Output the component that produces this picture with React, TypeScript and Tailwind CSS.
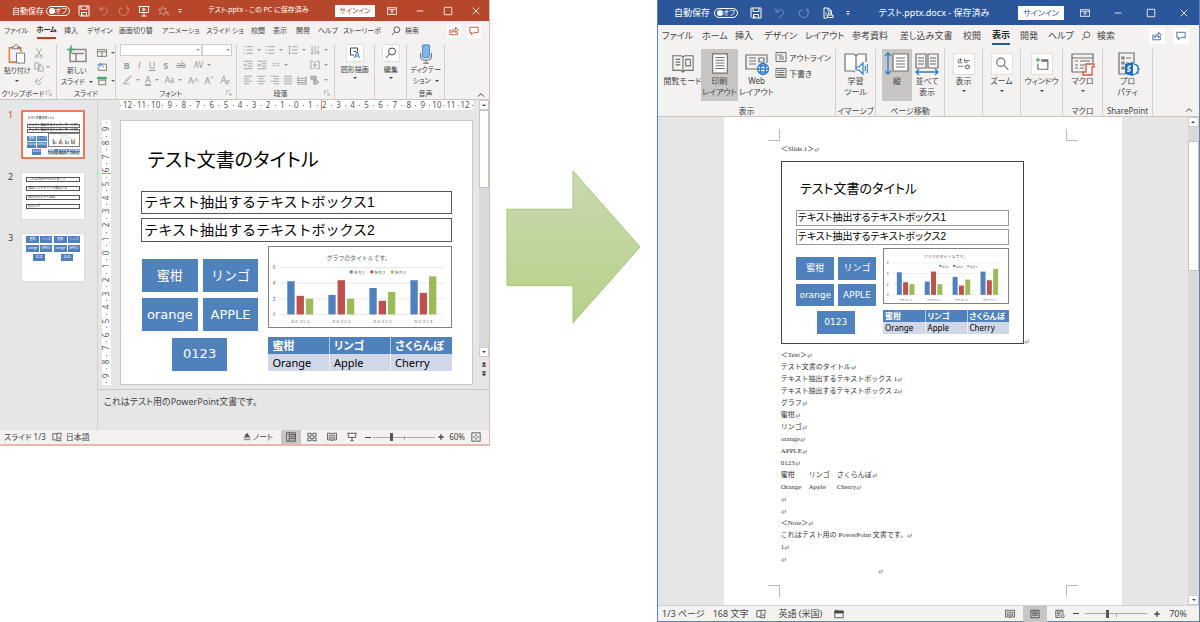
import React from "react";

/* ---------- icon helpers ---------- */

type IcoProps = { children: React.ReactNode; className?: string };

const Ico = ({ children, className = "size-3" }: IcoProps) => (
  <svg
    viewBox="0 0 24 24"
    fill="none"
    stroke="currentColor"
    strokeWidth="2"
    className={`shrink-0 ${className}`}
    aria-hidden="true"
  >
    {children}
  </svg>
);

const SaveIcon = () => (
  <Ico>
    <path d="M2 2h20v20H5l-3-3zM6 2v7h12V2M7 22v-7h10v7M10 22v-4" />
  </Ico>
);
const UndoIcon = () => (
  <Ico className="size-3 opacity-35">
    <path d="M4 3v7h7M4 10c4-6 14-6 15 1 0 4-4 7-9 11" />
  </Ico>
);
const RedoIcon = () => (
  <Ico className="size-3 opacity-35">
    <path d="M5 6a9 9 0 1 0 13 0M18 2v5h5M5 6l4 1" />
  </Ico>
);
const PresentIcon = () => (
  <Ico>
    <path d="M1 3h22M3 3v12h18V3M12 15v7M7 22h10M10 6v6l5-3z" />
  </Ico>
);
const SparkIcon = () => (
  <Ico className="size-3 opacity-40">
    <path d="M9 3l2 5 5-2-2 5 5 3-6 1-1 6-4-5-6 2 3-5-4-5 6 1z" />
    <path d="M15 15l7 7M18 14l4 4" />
  </Ico>
);
const PrintDocIcon = () => (
  <Ico>
    <path d="M10 22H4V2h9l6 6v4M12 2v6h7M11 16h11v5H11zM13 16v-4h6v4M7 12h3M7 16h2" />
  </Ico>
);
const RibbonModeIcon = () => (
  <Ico className="size-2.5">
    <path d="M1 4h22v16H1zM1 8h22M12 18v-7M8 14l4-4 4 4" />
  </Ico>
);
const MinusIcon = () => (
  <Ico className="size-2.5">
    <path d="M4 12h16" />
  </Ico>
);
const SquareIcon = () => (
  <Ico className="size-2.5">
    <path d="M3 3h18v18H3z" />
  </Ico>
);
const CloseIcon = () => (
  <Ico className="size-2.5">
    <path d="M4 4l16 16M20 4L4 20" />
  </Ico>
);
const SearchIcon = ({ className = "size-2.5" }: { className?: string }) => (
  <Ico className={className}>
    <circle cx="14" cy="9" r="7" />
    <path d="M9 14l-7 8" />
  </Ico>
);
const ZoomIcon = () => (
  <Ico className="size-3.5">
    <circle cx="10" cy="9" r="7" />
    <path d="M15 14l8 8" />
  </Ico>
);
const ShareIcon = () => (
  <Ico className="size-2.5">
    <path d="M6 10H2v11h18v-7M6 16c1-6 5-8 10-8V3l6 7-6 6v-4c-4 0-7 1-10 4z" />
  </Ico>
);
const CommentIcon = () => (
  <Ico className="size-2.5">
    <path d="M2 3h20v13H11l-5 5v-5H2z" />
  </Ico>
);
const BookIcon = ({ className = "size-2.5" }: { className?: string }) => (
  <Ico className={className}>
    <path d="M1 3h9l2 2 2-2h9v16h-9l-2 2-2-2H1zM12 5v16M4 8h5M4 12h5M4 15h5M15 8h5M15 12h5M15 15h5" />
  </Ico>
);
const ProofIcon = () => (
  <Ico className="size-2.5">
    <path d="M12 4H2v15h8l2 2V4l2-1h8v4M12 21h9v-7M14 13l3 3 6-8" />
  </Ico>
);
const Caret = () => (
  <svg viewBox="0 0 8 4" className="h-0.5 w-1 shrink-0" aria-hidden="true">
    <path d="M0 0h8L4 4z" fill="currentColor" />
  </svg>
);
const QuickMenuIcon = () => (
  <svg viewBox="0 0 8 10" className="h-1.5 w-1" aria-hidden="true">
    <path d="M1 1h6v2H1zM1 5h6L4 9z" fill="currentColor" />
  </svg>
);
const ChevronUp = () => (
  <Ico className="size-2">
    <path d="M3 17l9-9 9 9" strokeWidth="3" />
  </Ico>
);

type BtnProps = {
  label: string;
  children: React.ReactNode;
  className?: string;
};
const Btn = ({ label, children, className = "" }: BtnProps) => (
  <button type="button" aria-label={label} className={`flex items-center justify-center ${className}`}>
    {children}
  </button>
);

/* ---------- slide content ---------- */

const bars = [
  [35, 50, 53],
  [49, 34, 53],
  [42, 55, 46],
  [34, 47, 30],
];
const barColors = ["#4f81bd", "#c0504d", "#9bbb59"];

const Chart = () => (
  <svg viewBox="0 0 184 82" className="h-full w-full" role="img" aria-label="グラフのタイトルです。">
    <g fontFamily="'Noto Sans CJK JP', sans-serif" fill="#595959">
      <text x="91" y="13" textAnchor="middle" fontSize="6">
        グラフのタイトルです。
      </text>
      {[0, 2, 4, 6].map((v) => (
        <g key={v}>
          <path d={`M10 ${69 - v * 8}H178`} stroke="#d9d9d9" strokeWidth="0.6" />
          <text x="3" y={71 - v * 8} fontSize="5">
            {v}
          </text>
        </g>
      ))}
      {["系列 1", "系列 2", "系列 3"].map((s, i) => (
        <g key={s}>
          <rect x={82 + i * 21} y="24" width="3" height="3" fill={barColors[i]} />
          <text x={86 + i * 21} y="28" fontSize="4">
            {s}
          </text>
        </g>
      ))}
      {bars.map((group, g) => (
        <g key={g}>
          {group.map((top, i) => (
            <rect key={i} x={18 + g * 42 + i * 9.5} y={top} width="7.5" height={69 - top} fill={barColors[i]} />
          ))}
          <text x={31 + g * 42} y="78" fontSize="4" textAnchor="middle">
            {`カテゴリ ${g + 1}`}
          </text>
        </g>
      ))}
    </g>
  </svg>
);

type SlideSize = "large" | "small" | "thumb";

const titleText = {
  large: "text-[19px]",
  small: "text-[13px]",
  thumb: "text-[3px]",
};
const boxText = {
  large: "text-[14px] px-0.5 border border-[#555]",
  small: "text-[10px] px-px border border-[#999] [font-feature-settings:'palt']",
  thumb: "text-[3px] px-px border border-[#666]",
};
const tileText = {
  large: "text-[13px]",
  small: "text-[9px]",
  thumb: "text-[3px]",
};
const cellText = {
  large: "text-[11px] leading-[17px] pl-1",
  small: "text-[8px] leading-[12px] pl-0.5",
  thumb: "text-[3px] leading-[3px]",
};

const tile =
  "absolute flex h-[12.5%] w-[15.8%] items-center justify-center bg-[#4f81bd] font-['DejaVu_Sans','Noto_Sans_CJK_JP',sans-serif] text-white";

const Slide = ({ size }: { size: SlideSize }) => (
  <div className="relative aspect-[4/3] w-full overflow-hidden bg-white whitespace-nowrap text-black">
    <h2
      className={`absolute top-[8%] left-[7.6%] flex h-[13%] items-center font-['Noto_Sans_CJK_JP',sans-serif] [font-feature-settings:'palt'] ${titleText[size]}`}
    >
      テスト文書のタイトル
    </h2>
    <p
      className={`absolute top-[26.5%] right-[5.8%] left-[5.8%] flex h-[9%] items-center font-['Liberation_Sans','Noto_Sans_CJK_JP',sans-serif] ${boxText[size]}`}
    >
      テキスト抽出するテキストボックス1
    </p>
    <p
      className={`absolute top-[37%] right-[5.8%] left-[5.8%] flex h-[9%] items-center font-['Liberation_Sans','Noto_Sans_CJK_JP',sans-serif] ${boxText[size]}`}
    >
      テキスト抽出するテキストボックス2
    </p>
    <div className={`top-[52.5%] left-[6%] ${tile} ${tileText[size]}`}>蜜柑</div>
    <div className={`top-[52.5%] left-[23.3%] ${tile} ${tileText[size]}`}>リンゴ</div>
    <div className={`top-[67.3%] left-[6%] ${tile} ${tileText[size]}`}>orange</div>
    <div className={`top-[67.3%] left-[23.3%] ${tile} ${tileText[size]}`}>APPLE</div>
    <div className={`top-[82.3%] left-[14.5%] ${tile} ${tileText[size]}`}>0123</div>
    <div className="absolute top-[47.5%] left-[42%] h-[31.2%] w-[52.2%] border border-[#808080]">
      <Chart />
    </div>
    <table
      className={`absolute top-[82%] left-[42%] w-[52.2%] table-fixed border-collapse text-left font-['Noto_Sans','Noto_Sans_CJK_JP',sans-serif] ${cellText[size]}`}
    >
      <thead className="bg-[#4f81bd] text-white">
        <tr>
          {["蜜柑", "リンゴ", "さくらんぼ"].map((h) => (
            <th
              key={h}
              className={`border-r border-white/60 py-0 pr-0 font-bold last:border-r-0 [font-feature-settings:'palt'] ${cellText[size]}`}
            >
              {h}
            </th>
          ))}
        </tr>
      </thead>
      <tbody className="bg-[#d0d8e8]">
        <tr>
          {["Orange", "Apple", "Cherry"].map((c) => (
            <td key={c} className={`border-r border-white/60 py-0 pr-0 last:border-r-0 ${cellText[size]}`}>
              {c}
            </td>
          ))}
        </tr>
      </tbody>
    </table>
  </div>
);

const ThumbTwo = () => (
  <div className="flex aspect-[4/3] w-full flex-col gap-1 bg-white px-1 pt-1 font-['Noto_Sans_CJK_JP',sans-serif]">
    {["これはPowerPoint文書です", "抽出したテキストを検索する", "図形内の文字も抽出", "表の文字"].map((t) => (
      <p key={t} className="border border-[#555] px-px text-[3px] leading-[3px] whitespace-nowrap">
        {t}
      </p>
    ))}
  </div>
);

const miniTile = "flex h-[7px] items-center justify-center bg-[#4f81bd] text-[3px] leading-none text-white";
const ThumbThree = () => (
  <div className="flex aspect-[4/3] w-full justify-between bg-white px-1 pt-0.5 font-['Noto_Sans_CJK_JP',sans-serif]">
    {[0, 1].map((k) => (
      <div key={k} className="grid w-[26px] auto-rows-min grid-cols-2 gap-x-px gap-y-0.5">
        <span className={miniTile}>蜜柑</span>
        <span className={miniTile}>リンゴ</span>
        <span className={miniTile}>orange</span>
        <span className={miniTile}>APPLE</span>
        <span className={`col-span-2 mx-auto w-3 ${miniTile}`}>0123</span>
      </div>
    ))}
  </div>
);

/* ---------- shared window parts ---------- */

const WindowButtons = ({ className }: { className: string }) => (
  <div className={`flex items-center ${className}`}>
    <Btn label="リボンの表示オプション">
      <RibbonModeIcon />
    </Btn>
    <Btn label="最小化">
      <MinusIcon />
    </Btn>
    <Btn label="最大化">
      <SquareIcon />
    </Btn>
    <Btn label="閉じる">
      <CloseIcon />
    </Btn>
  </div>
);

const Toggle = () => (
  <button
    type="button"
    role="switch"
    aria-checked="false"
    aria-label="自動保存"
    className="flex h-2.5 w-6 items-center justify-between rounded-full border border-white px-0.5 text-[7px] leading-none"
  >
    <span className="size-1.5 rounded-full bg-white" />
    オフ
  </button>
);

const ZoomSlider = ({ value, className }: { value: number; className: string }) => (
  <div className={`flex items-center ${className}`}>
    <button type="button" aria-label="縮小" className="h-px w-1.5 bg-[#444]" />
    <div className="relative flex h-2.5 w-[62px] items-center">
      <input
        type="range"
        aria-label="ズーム"
        min="0"
        max="100"
        defaultValue={value}
        className="h-px w-full appearance-none bg-[#aaa] [&::-webkit-slider-thumb]:h-2 [&::-webkit-slider-thumb]:w-[3px] [&::-webkit-slider-thumb]:appearance-none [&::-webkit-slider-thumb]:bg-[#555]"
      />
      <span className="absolute top-1 left-1/2 h-1 w-px bg-[#aaa]" />
    </div>
    <Btn label="拡大" className="text-[#444]">
      <Ico className="size-2">
        <path d="M12 4v16M4 12h16" strokeWidth="4" />
      </Ico>
    </Btn>
  </div>
);

/* ---------- presentation window ---------- */

const pptTabs = [
  "ファイル",
  "ホーム",
  "挿入",
  "デザイン",
  "画面切り替",
  "アニメーショ",
  "スライド ショ",
  "校閲",
  "表示",
  "開発",
  "ヘルプ",
  "ストーリーボ",
];

const GroupLabel = ({ children, launcher = false }: { children?: React.ReactNode; launcher?: boolean }) => (
  <div className="mt-auto flex h-3 w-full items-center justify-center whitespace-nowrap">
    <span className="grow text-center">{children}</span>
    {launcher && (
      <Ico className="mr-1 size-1.5 opacity-60">
        <path d="M2 20V3h17M10 10l11 11M21 12v9h-9" />
      </Ico>
    )}
  </div>
);

const group = "flex min-w-0 flex-col items-center border-r border-[#d2d0ce] last:border-r-0";

const Glyph = ({ label, children }: { label: string; children: React.ReactNode }) => (
  <button type="button" aria-label={label} className="flex items-center gap-1 text-[9px] leading-none">
    {children}
  </button>
);

const Bullets = () => (
  <Ico className="size-2.5">
    <path d="M1 4h3M8 4h15M1 12h3M8 12h15M1 20h3M8 20h15" />
  </Ico>
);
const AlignIcon = ({ d }: { d: string }) => (
  <Ico className="size-2.5">
    <path d={d} />
  </Ico>
);
const Indent = () => (
  <Ico className="size-2.5">
    <path d="M1 3h22M11 9h12M11 15h12M1 21h22M1 12h7M5 9l3 3-3 3" />
  </Ico>
);

const PptRibbon = () => (
  <div className="grid h-[60px] grid-cols-[57fr_59fr_121fr_99fr_40fr_32fr_38fr_44fr] border-b border-[#c8c6c4] bg-[#f3f2f1] pt-1 pb-0.5 text-[7px] leading-[11px] text-[#444] [font-feature-settings:'palt']">
    <div className={group}>
      <div className="flex w-full justify-between pr-1.5 pl-1">
        <button type="button" className="flex flex-col items-center whitespace-nowrap">
          <svg viewBox="0 0 20 22" className="h-[21px] w-5" fill="none" aria-hidden="true">
            <path d="M6 4H2v15h8M14 8V4h-4" stroke="#e07b45" strokeWidth="1.6" />
            <path d="M5 5V3h2c0-3 4-3 4 0h2v2z" stroke="#777" />
            <path d="M9.500 9.500h8.500v10.500H9.500z" stroke="#777" fill="#fff" />
          </svg>
          貼り付け
          <span className="mt-1">
            <Caret />
          </span>
        </button>
        <div className="flex flex-col gap-1 pt-1 text-[#999]">
          <Btn label="切り取り" className="self-start">
            <Ico className="size-2.5">
              <path d="M6 1l9 16M18 1L9 17" />
              <circle cx="6" cy="20" r="3" />
              <circle cx="17" cy="20" r="3" />
            </Ico>
          </Btn>
          <Btn label="コピー" className="gap-0.5">
            <Ico className="size-2.5">
              <path d="M2 2h8l4 4v11H2zM10 7h7l5 5v10H10z" />
            </Ico>
            <Caret />
          </Btn>
          <Btn label="書式のコピー" className="self-start">
            <Ico className="size-2.5">
              <path d="M22 2l-8 8M8 8l8 8-5 6-9-9zM4 15l4-4" />
            </Ico>
          </Btn>
        </div>
      </div>
      <GroupLabel launcher>クリップボード</GroupLabel>
    </div>

    <div className={group}>
      <div className="flex w-full justify-center gap-1 pl-1">
        <button type="button" className="flex flex-col items-center whitespace-nowrap">
          <svg viewBox="0 0 20 20" className="h-[21px] w-5" fill="none" aria-hidden="true">
            <path d="M3 5h16v12H3zM5 9h12M9 9v8" stroke="#8a8a8a" strokeWidth="1.500" />
            <path d="M4 1v8M0 5h8" stroke="#3aa66a" strokeWidth="1.500" />
          </svg>
          新しい
          <span className="flex items-center gap-1">
            スライド
            <Caret />
          </span>
        </button>
        <div className="flex flex-col gap-1 pt-1 text-[#666]">
          <Btn label="レイアウト" className="gap-1">
            <Ico className="size-2.5">
              <path d="M1 4h22v16H1zM1 9h22M12 9v11" />
            </Ico>
            <Caret />
          </Btn>
          <Btn label="リセット" className="self-start">
            <Ico className="size-2.5">
              <path d="M6 5h17v15H3v-7" />
              <path d="M8 2L3 7l5 5M3 7h7c4 0 5 4 5 6" stroke="#2b7cd3" />
            </Ico>
          </Btn>
          <Btn label="セクション" className="gap-1">
            <Ico className="size-2.5">
              <path d="M1 3h22v4H1z" stroke="#3aa66a" fill="#3aa66a" />
              <path d="M4 10h17v11H4z" />
            </Ico>
            <Caret />
          </Btn>
        </div>
      </div>
      <GroupLabel>スライド</GroupLabel>
    </div>

    <div className={group}>
      <div className="flex w-full flex-col gap-1 px-1 text-[#999]">
        <div className="flex h-3">
          <div className="relative grow">
            <select aria-label="フォント" className="h-3 w-full appearance-none border border-[#d2d0ce] bg-white" />
            <span className="pointer-events-none absolute top-1 right-0.5 flex h-1 items-center">
              <Caret />
            </span>
          </div>
          <div className="relative w-[30px]">
            <select
              aria-label="フォント サイズ"
              className="h-3 w-full appearance-none border border-[#d2d0ce] bg-white"
            />
            <span className="pointer-events-none absolute top-1 right-0.5 flex h-1 items-center">
              <Caret />
            </span>
          </div>
        </div>
        <div className="flex h-2.5 items-center gap-2 px-1">
          <Glyph label="太字">
            <b>B</b>
          </Glyph>
          <Glyph label="斜体">
            <i className="font-['Liberation_Serif',serif]">I</i>
          </Glyph>
          <Glyph label="下線">
            <u>U</u>
          </Glyph>
          <Glyph label="影">
            <b>S</b>
          </Glyph>
          <Glyph label="取り消し線">
            <s className="text-[8px]">ab</s>
          </Glyph>
          <Glyph label="文字の間隔">
            <span className="text-[8px]">AV</span>
            <Caret />
          </Glyph>
        </div>
        <div className="flex h-3 items-center justify-between px-0.5">
          <Glyph label="蛍光ペン">
            <Ico className="size-2.5">
              <path d="M20 2L9 13l2 2L22 4zM9 13l-3 4h4M1 21h16" />
            </Ico>
            <Caret />
          </Glyph>
          <Glyph label="フォントの色">
            <span className="border-b-2 border-[#aaa]">A</span>
            <Caret />
          </Glyph>
          <Glyph label="文字種の変換">
            <span className="text-[8px]">Aa</span>
            <Caret />
          </Glyph>
          <Glyph label="フォント サイズの拡大">A^</Glyph>
          <Glyph label="フォント サイズの縮小">Aˇ</Glyph>
          <Glyph label="書式のクリア">
            <Ico className="size-2.5">
              <path d="M2 20L9 2l6 16M5 13h8M14 20l4 2 5-7-4-3zM12 17l2 3" />
            </Ico>
          </Glyph>
        </div>
      </div>
      <GroupLabel launcher>フォント</GroupLabel>
    </div>

    <div className={group}>
      <div className="flex w-full flex-col gap-1 px-1.5 text-[#999]">
        <div className="flex h-3 items-center justify-between">
          <Glyph label="箇条書き">
            <Bullets />
            <Caret />
          </Glyph>
          <Glyph label="段落番号">
            <Bullets />
            <Caret />
          </Glyph>
          <Glyph label="行間">
            <Ico className="size-2.5">
              <path d="M4 2v20M1 5l3-3 3 3M1 19l3 3 3-3M10 4h13M10 12h13M10 20h13" />
            </Ico>
            <Caret />
          </Glyph>
          <Glyph label="文字列の方向">
            <Ico className="size-2.5">
              <path d="M5 2v20M2 18l3 4 3-4M12 2v20M16 22l3-9 3 9M19 2v7" />
            </Ico>
            <Caret />
          </Glyph>
        </div>
        <div className="flex h-2.5 items-center justify-between">
          <Glyph label="インデントを減らす">
            <Indent />
          </Glyph>
          <Glyph label="インデントを増やす">
            <Indent />
          </Glyph>
          <Glyph label="段組み">
            <Ico className="size-2">
              <path d="M1 8h9M14 8h9M1 14h9M14 14h9" />
            </Ico>
            <Caret />
          </Glyph>
          <span className="w-3" />
          <Glyph label="文字の配置">
            <Ico className="size-2.5">
              <path d="M7 3H2v18h5M17 3h5v18h-5M12 3v18M7 12h10" />
            </Ico>
            <Caret />
          </Glyph>
        </div>
        <div className="flex h-3 items-center justify-between">
          <Glyph label="左揃え">
            <AlignIcon d="M2 3h20M2 9h13M2 15h20M2 21h13" />
          </Glyph>
          <Glyph label="中央揃え">
            <AlignIcon d="M2 3h20M6 9h12M2 15h20M6 21h12" />
          </Glyph>
          <Glyph label="右揃え">
            <AlignIcon d="M2 3h20M9 9h13M2 15h20M9 21h13" />
          </Glyph>
          <Glyph label="両端揃え">
            <AlignIcon d="M2 3h20M2 9h20M2 15h20M2 21h20" />
          </Glyph>
          <Glyph label="均等割り付け">
            <AlignIcon d="M2 3v19h20V3M2 8h20M2 13h20M2 18h20" />
          </Glyph>
          <Glyph label="SmartArt に変換">
            <Ico className="size-2.5">
              <path d="M2 3h13v7H2zM7 12h8l6 5-6 5H9V12z" fill="#bbb" />
            </Ico>
            <Caret />
          </Glyph>
        </div>
      </div>
      <GroupLabel launcher>段落</GroupLabel>
    </div>

    <div className={group}>
      <button type="button" className="flex flex-col items-center gap-0.5 whitespace-nowrap">
        <span className="flex size-[18px] items-center justify-center border border-[#e1dfdd] bg-white">
          <Ico className="size-3">
            <path d="M10 16H3V2h14v6M9 9h5" />
            <path d="M11 22l5-13 5 13M13 18h6" stroke="#2b7cd3" />
          </Ico>
        </span>
        <span>図形描画</span>
        <Caret />
      </button>
    </div>
    <div className={group}>
      <button type="button" className="flex flex-col items-center gap-0.5">
        <span className="flex size-[18px] items-center justify-center border border-[#e1dfdd] bg-white">
          <SearchIcon className="size-3" />
        </span>
        <span>編集</span>
        <Caret />
      </button>
    </div>
    <div className={group}>
      <button type="button" className="flex flex-col items-center whitespace-nowrap">
        <svg viewBox="0 0 16 22" className="h-5 w-4" fill="none" aria-hidden="true">
          <path d="M2 10v4c0 5 12 5 12 0v-4M8 18v3M5 21h6" stroke="#777" strokeWidth="1.200" />
          <rect x="4" y="1" width="8" height="14" rx="1" fill="#83b4e3" stroke="#3f7fc0" />
        </svg>
        ディクテー
        <span className="flex items-center gap-1">
          ション
          <Caret />
        </span>
      </button>
      <GroupLabel>音声</GroupLabel>
    </div>
    <div className="flex items-end justify-end pr-1">
      <Btn label="リボンを折りたたむ">
        <ChevronUp />
      </Btn>
    </div>
  </div>
);

const range = (n: number) => [...Array(2 * n + 1).keys()].map((i) => Math.abs(i - n));

const Ruler = ({ max, vertical = false }: { max: number; vertical?: boolean }) => (
  <div
    className={`flex items-center justify-between bg-white font-['Noto_Sans',sans-serif] text-[8px] leading-none text-[#555] ${vertical ? "w-[9px] flex-col py-0.5" : "h-2.5"}`}
  >
    <i className="size-px bg-[#999]" />
    {range(max).map((n, i) => (
      <React.Fragment key={i}>
        <span className={vertical ? "-rotate-90" : "w-2.5 text-center"}>{n}</span>
        <i className="size-px bg-[#777]" />
      </React.Fragment>
    ))}
  </div>
);

const PptWindow = () => (
  <section className="border-r border-b-2 border-[#e9b8ab] bg-[#e6e6e6] font-['Noto_Sans','Noto_Sans_CJK_JP',sans-serif] text-[#444]">
    <header className="flex h-[21px] items-center bg-[#b7472a] pl-3 text-[7px] whitespace-nowrap text-white [font-feature-settings:'palt']">
      <span className="text-[8px]">自動保存</span>
      <div className="ml-0.5 flex items-center">
        <Toggle />
      </div>
      <div className="ml-2 flex items-center gap-2">
        <Btn label="上書き保存">
          <SaveIcon />
        </Btn>
        <Btn label="元に戻す">
          <UndoIcon />
        </Btn>
        <Btn label="やり直し">
          <RedoIcon />
        </Btn>
        <Btn label="スライド ショーの開始">
          <PresentIcon />
        </Btn>
        <Btn label="特殊効果">
          <SparkIcon />
        </Btn>
        <Btn label="クイック アクセス">
          <QuickMenuIcon />
        </Btn>
      </div>
      <h1 className="grow text-center">テスト.pptx - この PC に保存済み</h1>
      <button type="button" className="h-3 w-10 bg-white leading-none text-[#b7472a]">
        サインイン
      </button>
      <WindowButtons className="ml-3 gap-[18px] pr-2" />
    </header>

    <nav
      aria-label="リボン タブ"
      className="grid h-[19px] grid-cols-[33fr_27fr_23fr_32fr_43fr_44fr_45fr_22fr_23fr_22fr_25fr_48fr_36fr_66fr] items-center bg-[#f3f2f1] text-[7px] leading-[14px] whitespace-nowrap [font-feature-settings:'palt']"
    >
      {pptTabs.map((t) => (
        <a
          key={t}
          href="#"
          className={
            t === "ホーム" ? "mx-auto min-w-0 border-b-2 border-[#c43e1c] font-bold text-[#222]" : "min-w-0 pl-1"
          }
        >
          {t}
        </a>
      ))}
      <a href="#" className="flex min-w-0 items-center gap-1 pl-1">
        <SearchIcon />
        検索
      </a>
      <div className="flex justify-end gap-1.5 pr-2 text-[#c43e1c]">
        <Btn label="共有" className="size-3.5 bg-white">
          <ShareIcon />
        </Btn>
        <Btn label="コメント" className="size-3.5 bg-white">
          <CommentIcon />
        </Btn>
      </div>
    </nav>

    <PptRibbon />

    <div className="grid grid-cols-[98fr_391fr]">
      <aside className="flex flex-col gap-[13px] border-r border-[#d0d0d0] pt-2.5 pr-3 pl-2 text-[9px] leading-none">
        <div className="flex items-start gap-2">
          <span className="text-[#d24726]">1</span>
          <div className="grow border-2 border-[#ec7a5c]">
            <Slide size="thumb" />
          </div>
        </div>
        <div className="flex items-start gap-2">
          <span>2</span>
          <div className="grow border border-[#ddd]">
            <ThumbTwo />
          </div>
        </div>
        <div className="flex items-start gap-2">
          <span>3</span>
          <div className="grow border border-[#ddd]">
            <ThumbThree />
          </div>
        </div>
      </aside>

      <div>
        <div className="grid grid-cols-[381fr_10fr]">
          <div className="pr-1.5 pb-1 pl-1">
            <div className="relative pl-[18px]">
              <Ruler max={12} />
              <i className="absolute inset-y-0 left-[59%] w-px bg-[#e58b78]" />
            </div>
            <div className="mt-2.5 grid grid-cols-[9px_1fr] gap-[9px]">
              <div className="relative flex">
                <Ruler max={9} vertical />
                <i className="absolute inset-x-0 top-1/5 h-px bg-[#e58b78]" />
              </div>
              <div className="border border-[#c8c8c8]">
                <Slide size="large" />
              </div>
            </div>
          </div>
          <div className="flex flex-col items-center bg-[#dadada] text-[#444]">
            <Btn label="上へスクロール" className="size-2.5 rotate-180 border border-[#ccc] bg-white">
              <Caret />
            </Btn>
            <div className="h-[78px] w-full border border-[#c4c4c4] bg-white" />
            <Btn label="下へスクロール" className="mt-auto size-2.5 border border-[#ccc] bg-white">
              <Caret />
            </Btn>
            <div className="flex w-full flex-col items-center gap-1 bg-[#e6e6e6] pt-1 pb-3">
              <Btn label="前のスライド">
                <Ico className="size-1.5">
                  <path d="M4 12l8-8 8 8zM4 22l8-8 8 8z" fill="currentColor" />
                </Ico>
              </Btn>
              <Btn label="次のスライド">
                <Ico className="size-1.5">
                  <path d="M4 2l8 8 8-8zM4 12l8 8 8-8z" fill="currentColor" />
                </Ico>
              </Btn>
            </div>
          </div>
        </div>
        <p className="h-[41px] border-t border-[#c8c8c8] pt-1.5 pl-1.5 text-[9px] leading-3 [font-feature-settings:'palt']">
          これはテスト用のPowerPoint文書です。
        </p>
      </div>
    </div>

    <footer className="flex h-3.5 items-center bg-[#f3f2f1] pr-2 pl-1 text-[8px] leading-none whitespace-nowrap [font-feature-settings:'palt']">
      <span>スライド 1/3</span>
      <span className="ml-1.5 flex">
        <ProofIcon />
      </span>
      <span className="ml-1">日本語</span>
      <button type="button" className="ml-auto flex items-center gap-0.5">
        <Ico className="size-2">
          <path d="M12 1l7 9H5zM2 14h20M2 20h20" fill="currentColor" />
        </Ico>
        ノート
      </button>
      <Btn label="標準" className="ml-2 h-3.5 w-5 bg-[#c8c6c4]">
        <Ico className="size-2.5">
          <path d="M1 2h22v20H1zM8 2v20M8 16h15M12 6h8v6h-8z" />
        </Ico>
      </Btn>
      <Btn label="スライド一覧" className="ml-1.5">
        <Ico className="size-2.5">
          <path d="M2 3h8v7H2zM14 3h8v7h-8zM2 14h8v7H2zM14 14h8v7h-8z" />
        </Ico>
      </Btn>
      <Btn label="閲覧表示" className="ml-2.5">
        <BookIcon />
      </Btn>
      <Btn label="スライド ショー" className="mr-2 ml-2.5">
        <Ico className="size-2.5">
          <path d="M1 3h22M3 3v10h18V3M12 13v8M8 21h8" />
        </Ico>
      </Btn>
      <ZoomSlider value={28} className="gap-0.5" />
      <span className="ml-1">60%</span>
      <Btn label="ウィンドウに合わせる" className="ml-1.5">
        <Ico className="size-2.5">
          <path d="M2 2h20v20H2zM12 5v5M12 14v5M5 12h5M14 12h5" />
        </Ico>
      </Btn>
    </footer>
  </section>
);

/* ---------- document window ---------- */

const wordTabs = [
  "ファイル",
  "ホーム",
  "挿入",
  "デザイン",
  "レイアウト",
  "参考資料",
  "差し込み文書",
  "校閲",
  "表示",
  "開発",
  "ヘルプ",
];

const LargeButton = ({
  icon,
  lines,
  active = false,
  menu = false,
}: {
  icon: React.ReactNode;
  lines: string[];
  active?: boolean;
  menu?: boolean;
}) => (
  <button
    type="button"
    aria-pressed={active}
    className={`flex h-[52px] min-w-0 grow basis-0 flex-col items-center pt-[3px] whitespace-nowrap ${active ? "bg-[#c8c6c4]" : ""}`}
  >
    <span className="flex h-[23px] items-center justify-center text-[#6e6e6e]">{icon}</span>
    {lines.map((l) => (
      <span key={l}>{l}</span>
    ))}
    {menu && (
      <span className="mt-1">
        <Caret />
      </span>
    )}
  </button>
);

const PageIcon = () => (
  <Ico className="size-[22px]">
    <path d="M4 1h16v21H4z" strokeWidth="1.200" fill="#fff" />
    <path d="M7 5h10M7 8h10M7 11h10M7 14h10M7 17h10" strokeWidth="1.100" />
  </Ico>
);
const OpenBook = () => (
  <Ico className="size-[22px]">
    <path
      d="M1 3h9l2 1 2-1h9v16h-9l-2 2-2-2H1zM12 4v17M4 7h5M4 10h5M4 13h5M15 7h5v7h-5z"
      strokeWidth="1.200"
    />
  </Ico>
);
const WebIcon = () => (
  <Ico className="size-6">
    <path d="M12 17H1V3h21v8M4 6h7M4 9h7M4 12h7M14 6h5v4h-5z" strokeWidth="1.200" />
    <g stroke="#2b7cd3" strokeWidth="1.300">
      <circle cx="18" cy="17" r="5.500" fill="#fff" />
      <ellipse cx="18" cy="17" rx="2.500" ry="5.500" />
      <path d="M12.500 17h11M13.500 14h9M13.500 20h9" />
    </g>
  </Ico>
);
const LearnIcon = () => (
  <Ico className="size-6">
    <path d="M11 20l-2-1H1V2h9l2 2 2-2h8v8M12 4v11" strokeWidth="1.200" fill="#fff" />
    <g stroke="#2b7cd3" strokeWidth="1.200">
      <path d="M12 15h3l4-4v11l-4-4h-3z" fill="#fff" />
      <path d="M21 14c1 2 1 3 0 5M23 12c2 3 1 6 0 9" />
    </g>
  </Ico>
);
const VerticalIcon = () => (
  <Ico className="size-6">
    <path d="M8 2h15v17H8z" strokeWidth="1.200" fill="#fff" />
    <path d="M11 6h9M11 9h9M11 12h9M11 15h9" strokeWidth="1.200" />
    <path d="M3 1v21M0 4l3-3 3 3M0 19l3 3 3-3" stroke="#2b7cd3" strokeWidth="1.300" />
  </Ico>
);
const SideIcon = () => (
  <Ico className="size-6">
    <path d="M1 2h10v14H1zM13 2h10v14H13zM3 6h6M3 9h6M3 12h6M15 6h6M15 9h6M15 12h6" strokeWidth="1.200" />
    <path d="M1 20h22M4 17l-3 3 3 3M20 17l3 3-3 3" stroke="#2b7cd3" strokeWidth="1.300" />
  </Ico>
);
const MacroIcon = () => (
  <Ico className="size-6">
    <path
      d="M12 20H1V2h21v9M1 6h21M4 9h3M9 9h10M4 13h3M9 13h5M4 16h3M9 16h4"
      strokeWidth="1.200"
    />
    <path d="M15 12h8v3h-2v8h-9v-3h3z" stroke="#d8583a" strokeWidth="1.300" fill="#fff" />
  </Ico>
);
const PropertyIcon = () => (
  <Ico className="size-6">
    <path d="M9 22H3V1h15v10M6 5h2v2H6zM6 10h2v2H6zM6 15h2v2H6zM10 6h5M10 11h3" strokeWidth="1.200" />
    <path d="M16 11l6 3v7l-6 2M20 12l3 5-3 5" stroke="#2b7cd3" strokeWidth="1.300" />
    <path d="M9 12l8-2v14l-8-2z" fill="#1f6fc0" stroke="none" />
    <path d="M15 14.500c-3-1-4 2-2 2.500s1 3-2 2" stroke="#fff" strokeWidth="1.300" />
  </Ico>
);
const Boxed = ({ children }: { children: React.ReactNode }) => (
  <span className="flex size-[22px] items-center justify-center border border-[#e1dfdd] bg-white">{children}</span>
);

const wGroup = "flex min-w-0 flex-col border-r border-[#d2d0ce] px-0.5";

const WordRibbon = () => (
  <div className="grid h-[70px] grid-cols-[178fr_40fr_69fr_38fr_38fr_42fr_40fr_50fr_46fr] border-b border-[#c8c6c4] bg-[#f3f2f1] pt-0.5 text-[8px] leading-[11px] text-[#444] [font-feature-settings:'palt']">
    <div className={wGroup}>
      <div className="flex pl-1">
        <LargeButton icon={<OpenBook />} lines={["閲覧モード"]} />
        <LargeButton icon={<PageIcon />} lines={["印刷", "レイアウト"]} active />
        <LargeButton icon={<WebIcon />} lines={["Web", "レイアウト"]} />
        <div className="flex w-[58px] flex-col gap-1 pt-0.5 whitespace-nowrap">
          <button type="button" className="flex items-center gap-0.5">
            <Ico>
              <path d="M2 3h20v18H2zM5 8h10M8 12h10M8 16h10" strokeWidth="1.500" />
            </Ico>
            アウトライン
          </button>
          <button type="button" className="flex items-center gap-0.5">
            <Ico>
              <path d="M2 3h20v18H2zM5 7h14M5 11h14M5 15h14M5 18h14" strokeWidth="1.500" />
            </Ico>
            下書き
          </button>
        </div>
      </div>
      <GroupLabel>表示</GroupLabel>
    </div>
    <div className={wGroup}>
      <div className="flex">
        <LargeButton icon={<LearnIcon />} lines={["学習", "ツール"]} />
      </div>
      <GroupLabel>イマーシブ</GroupLabel>
    </div>
    <div className={wGroup}>
      <div className="flex pl-1">
        <LargeButton icon={<VerticalIcon />} lines={["縦"]} active />
        <LargeButton icon={<SideIcon />} lines={["並べて", "表示"]} />
      </div>
      <GroupLabel>ページ移動</GroupLabel>
    </div>
    <div className={wGroup}>
      <div className="flex">
        <LargeButton
          icon={
            <Boxed>
              <Ico className="size-3.5">
                <path d="M9 10H2V5h7M6 2v6M13 6h9M13 3v6h6M2 16h9M13 16h2M22 16h1" strokeWidth="1.600" />
                <circle cx="18" cy="17" r="3" />
              </Ico>
            </Boxed>
          }
          lines={["表示"]}
          menu
        />
      </div>
    </div>
    <div className={wGroup}>
      <div className="flex">
        <LargeButton
          icon={
            <Boxed>
              <ZoomIcon />
            </Boxed>
          }
          lines={["ズーム"]}
          menu
        />
      </div>
    </div>
    <div className={wGroup}>
      <div className="flex">
        <LargeButton
          icon={
            <Boxed>
              <Ico className="size-3.5">
                <path d="M5 11v10h17V5H11M11 7h11" />
                <path d="M5 1v8M1 5h8" stroke="#3aa66a" />
              </Ico>
            </Boxed>
          }
          lines={["ウィンドウ"]}
          menu
        />
      </div>
    </div>
    <div className={wGroup}>
      <div className="flex">
        <LargeButton icon={<MacroIcon />} lines={["マクロ"]} menu />
      </div>
      <GroupLabel>マクロ</GroupLabel>
    </div>
    <div className={wGroup}>
      <div className="flex">
        <LargeButton icon={<PropertyIcon />} lines={["プロ", "パティ"]} />
      </div>
      <GroupLabel>SharePoint</GroupLabel>
    </div>
    <div className="flex items-end justify-end pr-1.5 pb-0.5">
      <Btn label="リボンを折りたたむ">
        <ChevronUp />
      </Btn>
    </div>
  </div>
);

const Mark = () => (
  <svg viewBox="0 0 8 8" className="inline-block size-[5px]" aria-hidden="true">
    <path d="M7 1v4H2M4 2L1 5l3 3" fill="none" stroke="#777" strokeWidth="1.200" />
  </svg>
);

const textLines = [
  "＜Text＞",
  "テスト文書のタイトル",
  "テキスト抽出するテキストボックス 1",
  "テキスト抽出するテキストボックス 2",
  "グラフ",
  "蜜柑",
  "リンゴ",
  "orange",
  "APPLE",
  "0123",
];
const closingLines = ["", "", "＜Note＞", "これはテスト用の PowerPoint 文書です。", "1", ""];

const WordPage = () => (
  <article className="mx-auto w-[75%] bg-white pt-3 font-['Liberation_Serif','Noto_Sans_CJK_JP',serif] text-[7px] leading-3 text-[#333]">
    <div className="flex justify-between px-[11%]">
      <i className="size-3 border-r border-b border-[#bbb]" />
      <i className="size-3 border-b border-l border-[#bbb]" />
    </div>
    <div className="px-[14.2%]">
      <p className="mt-0.5">
        ＜Slide.1＞
        <Mark />
      </p>
      <div className="mt-1.5 flex items-end">
        <div className="w-[85.5%] shrink-0 border border-[#444]">
          <Slide size="small" />
        </div>
        <Mark />
      </div>
      <div className="mt-[5px]">
        {textLines.map((t) => (
          <p key={t}>
            {t}
            <Mark />
          </p>
        ))}
        <div className="grid w-fit grid-cols-[28px_28px_auto]">
          <span>蜜柑</span>
          <span>リンゴ</span>
          <span>
            さくらんぼ
            <Mark />
          </span>
          <span>Orange</span>
          <span>Apple</span>
          <span>
            Cherry
            <Mark />
          </span>
        </div>
        {closingLines.map((t, i) => (
          <p key={i}>
            {t}
            <Mark />
          </p>
        ))}
      </div>
      <p className="pr-[30%] text-center">
        <Mark />
      </p>
    </div>
    <div className="mt-2 flex justify-between px-[11%] pb-2">
      <i className="size-3 border-t border-r border-[#bbb]" />
      <i className="size-3 border-t border-l border-[#bbb]" />
    </div>
  </article>
);

const WordWindow = () => (
  <section className="flex min-h-screen flex-col border-x border-b border-[#5f83bf] bg-[#e6e6e6] font-['Noto_Sans','Noto_Sans_CJK_JP',sans-serif] text-[#444]">
    <header className="flex h-[25px] items-center bg-[#2b579a] pl-4 text-[9px] whitespace-nowrap text-white [font-feature-settings:'palt']">
      <span>自動保存</span>
      <div className="ml-1">
        <Toggle />
      </div>
      <div className="ml-3 flex items-center gap-3">
        <Btn label="上書き保存">
          <SaveIcon />
        </Btn>
        <Btn label="元に戻す">
          <UndoIcon />
        </Btn>
        <Btn label="やり直し">
          <RedoIcon />
        </Btn>
        <Btn label="印刷プレビュー">
          <PrintDocIcon />
        </Btn>
        <Btn label="クイック アクセス">
          <QuickMenuIcon />
        </Btn>
      </div>
      <h1 className="grow text-center">テスト.pptx.docx - 保存済み</h1>
      <button type="button" className="h-3.5 w-[46px] bg-white text-[8px] leading-none text-[#2b579a]">
        サインイン
      </button>
      <WindowButtons className="ml-4 gap-[23px] pr-2.5" />
    </header>

    <nav
      aria-label="リボン タブ"
      className="grid h-[22px] grid-cols-[40fr_33fr_29fr_41fr_47fr_48fr_63fr_29fr_28fr_28fr_33fr_47fr_75fr] items-center bg-[#f3f2f1] text-[9px] leading-4 whitespace-nowrap [font-feature-settings:'palt']"
    >
      {wordTabs.map((t) => (
        <a
          key={t}
          href="#"
          className={
            t === "表示" ? "mr-auto ml-1 min-w-0 border-b-2 border-[#2b579a] font-bold text-[#222]" : "min-w-0 pl-1"
          }
        >
          {t}
        </a>
      ))}
      <a href="#" className="flex min-w-0 items-center gap-1.5 pl-1">
        <SearchIcon />
        検索
      </a>
      <div className="flex justify-end gap-2 pr-2.5 text-[#2b579a]">
        <Btn label="共有" className="size-4 bg-white">
          <ShareIcon />
        </Btn>
        <Btn label="コメント" className="size-4 bg-white">
          <CommentIcon />
        </Btn>
      </div>
    </nav>

    <WordRibbon />

    <div className="grid grow grid-cols-[530fr_11fr]">
      <div className="flex">
        <WordPage />
      </div>
      <div className="flex flex-col bg-[#dadada]">
        <Btn label="上へスクロール" className="h-2.5 rotate-180 border border-[#ccc] bg-white">
          <Caret />
        </Btn>
        <div className="mt-3.5 h-[130px] border border-[#c4c4c4] bg-white" />
        <Btn label="下へスクロール" className="mt-auto h-2.5 border border-[#ccc] bg-white">
          <Caret />
        </Btn>
      </div>
    </div>

    <footer className="flex h-4 items-center border-t border-[#d0d0d0] bg-[#f3f2f1] pr-3 pl-1 text-[9px] leading-none whitespace-nowrap [font-feature-settings:'palt']">
      <span>1/3 ページ</span>
      <span className="ml-2">168 文字</span>
      <span className="ml-2 flex">
        <ProofIcon />
      </span>
      <span className="ml-3">英語 (米国)</span>
      <Ico className="ml-3 size-2.5">
        <path d="M2 5h20v16H2zM2 9h20M3 3h6" fill="none" />
        <path d="M2 5h20v4H2z" fill="currentColor" />
      </Ico>
      <Btn label="閲覧モード" className="ml-auto">
        <BookIcon />
      </Btn>
      <Btn label="印刷レイアウト" className="ml-2 h-4 w-6 bg-[#c8c6c4]">
        <Ico className="size-2.5">
          <path d="M2 3h20v18H2zM5 7h14M5 11h14M5 15h14" />
        </Ico>
      </Btn>
      <Btn label="Web レイアウト" className="mr-2 ml-2">
        <Ico className="size-2.5">
          <path d="M12 20H2V3h17v8M5 7h11M5 11h8M5 15h6" />
          <circle cx="18" cy="17" r="4" />
        </Ico>
      </Btn>
      <ZoomSlider value={36} className="gap-1.5" />
      <span className="ml-2">70%</span>
    </footer>
  </section>
);

/* ---------- page ---------- */

export default function App() {
  return (
    <main className="grid min-h-screen grid-cols-[490fr_167fr_543fr] items-start bg-white">
      <PptWindow />
      <div className="px-4 pt-[170px]">
        <svg viewBox="0 0 136 156" className="w-full" role="img" aria-label="変換">
          <defs>
            <linearGradient id="arrowFill" x1="0" y1="0" x2="0" y2="1">
              <stop offset="0" stopColor="#c9d9ad" />
              <stop offset="1" stopColor="#b7d08a" />
            </linearGradient>
          </defs>
          <path
            d="M1 39.500H67.500V1L135 77.500 67.500 154V116.500H1z"
            fill="url(#arrowFill)"
            stroke="#a9c578"
          />
        </svg>
      </div>
      <WordWindow />
    </main>
  );
}
